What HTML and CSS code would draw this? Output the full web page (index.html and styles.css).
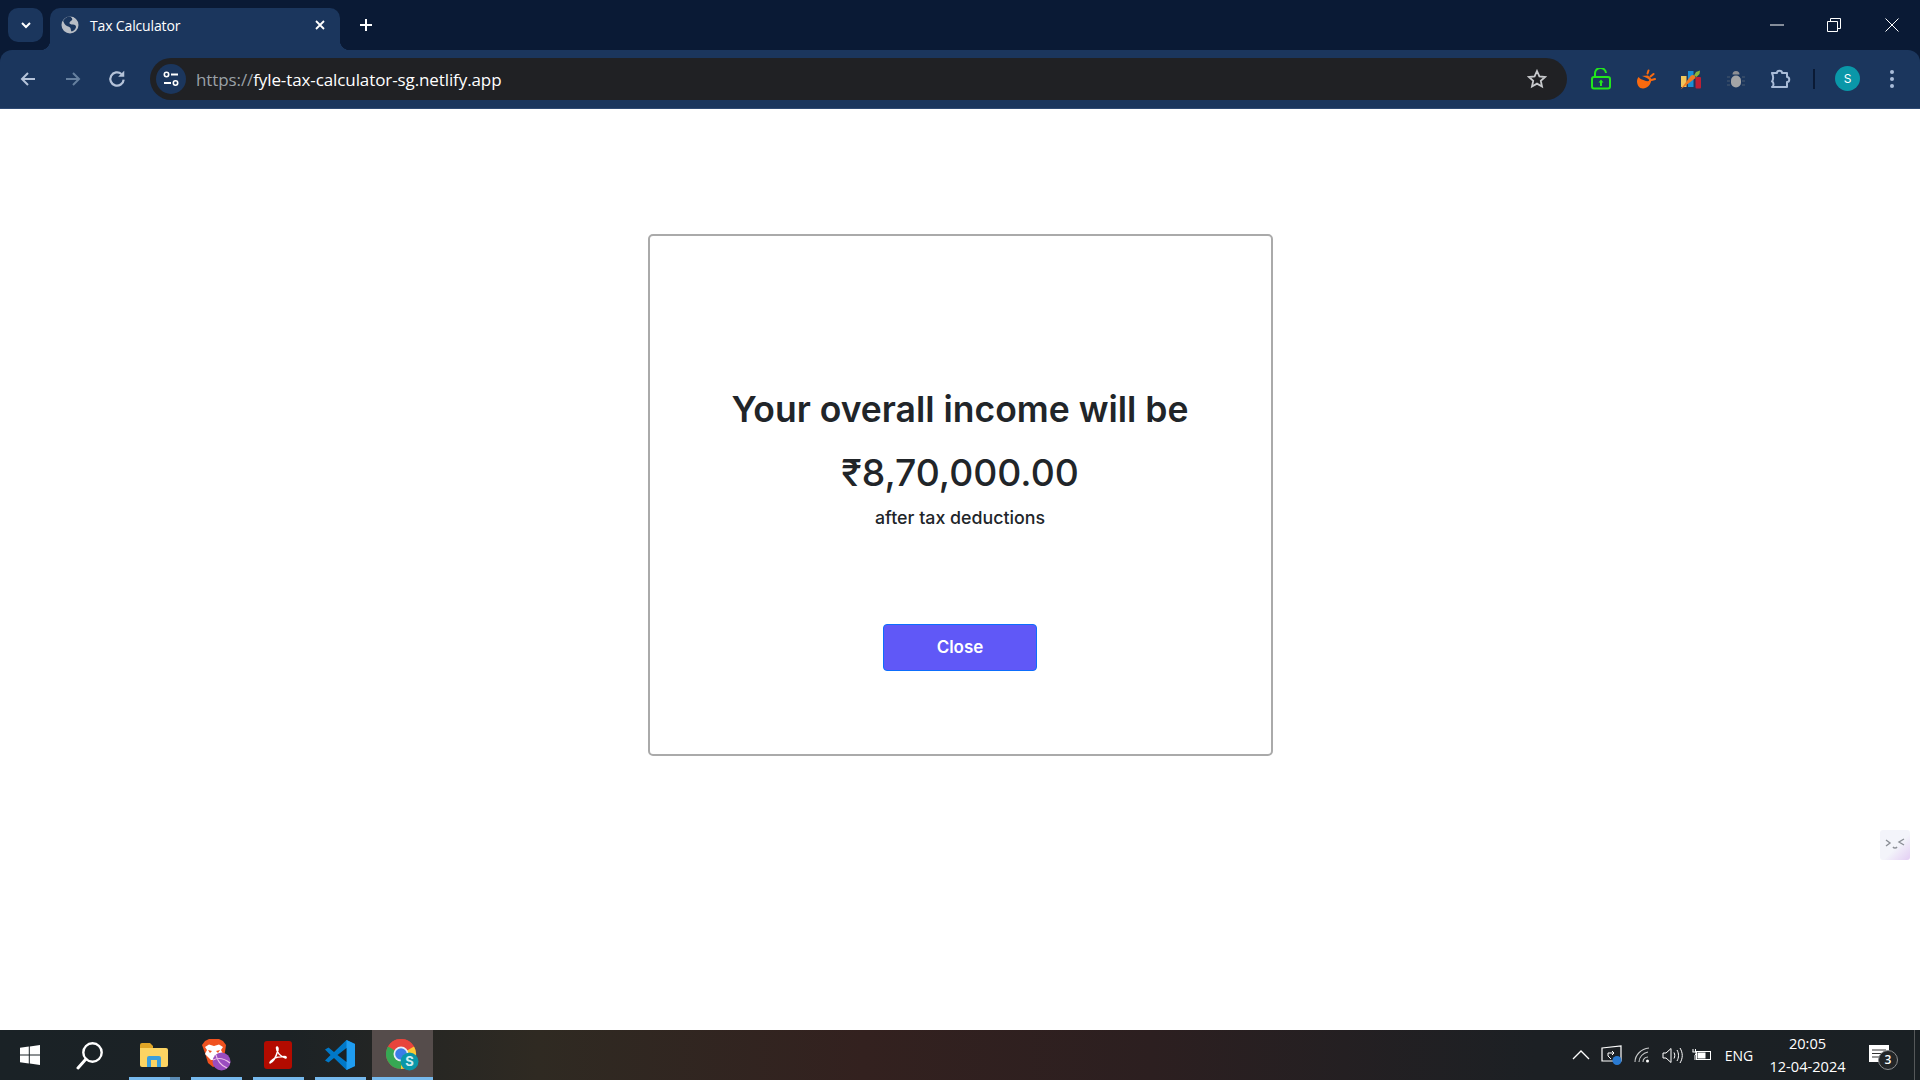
FILE: index.html
```html
<!DOCTYPE html>
<html lang="en">
<head>
<meta charset="utf-8">
<title>Tax Calculator</title>
<link rel="stylesheet" href="styles.css">
</head>
<body>
<header class="browser">
  <div class="tabstrip">
    <button class="tab-list"><svg width="14" height="14" viewBox="0 0 14 14"><path d="M3 5l4 4 4-4" fill="none" stroke="#fff" stroke-width="2"/></svg></button>
    <div class="tab">
      <svg class="favicon" width="18" height="18" viewBox="0 0 18 18"><circle cx="9" cy="9" r="8.5" fill="#b9bec6"/><path d="M9 .5c2 1 3 2 2.500 3.500-.5 1.500-2.500 1-3 2.500s1.500 2 3.500 2 3 1 3 2.500-1.500 3-3 4l-1.500.5c-1-1.500-.5-3-1.500-4S5 10 4 8.500 2.500 5.500 2 5C3.500 2.500 6 .5 9 .5z" fill="#1b365d"/><path d="M10 1c3 .5 6 3 6.500 6l-3 1c-1-1-3-.5-4-1.500S12 4 11.500 3z" fill="#b9bec6"/></svg>
      <span class="tab-title">Tax Calculator</span>
      <svg class="tab-close" width="12" height="12" viewBox="0 0 12 12"><path d="M2 2l8 8M10 2l-8 8" stroke="#fff" stroke-width="1.800"/></svg>
    </div>
    <div class="new-tab"><svg width="16" height="16" viewBox="0 0 16 16"><path d="M8 2v12M2 8h12" stroke="#fff" stroke-width="2"/></svg></div>
    <div class="spacer"></div>
    <div class="win-btn win-min"><svg width="14" height="14" viewBox="0 0 14 14"><path d="M0 7h14" stroke="#fff" stroke-width="1"/></svg></div>
    <div class="win-btn win-max"><svg width="14" height="14" viewBox="0 0 14 14"><path d="M.5 3.500h10v10H.5z M3.500 3.500V.5h10v10h-3" fill="none" stroke="#fff" stroke-width="1"/></svg></div>
    <div class="win-btn win-close"><svg width="14" height="14" viewBox="0 0 14 14"><path d="M.5.5l13 13M13.500.5l-13 13" stroke="#fff" stroke-width="1"/></svg></div>
  </div>
  <div class="toolbar">
    <div class="nav-btn"><svg width="18" height="18" viewBox="0 0 18 18"><path d="M16 9H3M9 3L3 9l6 6" fill="none" stroke="#b5c3d9" stroke-width="2"/></svg></div>
    <div class="nav-btn"><svg width="18" height="18" viewBox="0 0 18 18"><path d="M2 9h13M9 3l6 6-6 6" fill="none" stroke="#66809f" stroke-width="2"/></svg></div>
    <div class="nav-btn"><svg width="20" height="20" viewBox="0 0 18 18"><path d="M15 9.500A6 6 0 1 1 13 4.500" fill="none" stroke="#b5c3d9" stroke-width="2"/><path d="M15.500 1.500v5.500H10z" fill="#b5c3d9"/></svg></div>
    <div class="omnibox">
      <div class="site-icon"><svg width="16" height="16" viewBox="0 0 16 16"><circle cx="3.500" cy="3.500" r="2.200" fill="none" stroke="#fff" stroke-width="1.600"/><path d="M8 3.500h7M1 12h7" stroke="#fff" stroke-width="1.800"/><circle cx="12.500" cy="12" r="2.200" fill="none" stroke="#fff" stroke-width="1.600"/></svg></div>
      <div class="url"><span class="url-scheme">https://</span>fyle-tax-calculator-sg.netlify.app</div>
      <svg class="star" width="20" height="20" viewBox="0 0 20 20"><path d="M10 2l2.400 5.400 5.600.6-4.200 3.800 1.200 5.700L10 14.600l-5 2.900 1.200-5.700L2 8l5.600-.6z" fill="none" stroke="#c7c9cc" stroke-width="1.800"/></svg>
    </div>
    <div class="ext"><svg width="20" height="22" viewBox="0 0 20 22"><path d="M4 9V6a5.500 5.500 0 0 1 11-1" fill="none" stroke="#22e61c" stroke-width="2"/><rect x="1" y="9" width="18" height="11.500" rx="2" fill="none" stroke="#22e61c" stroke-width="2"/><path d="M10 11.500l2.500 3h-1.500v3.500H9v-3.500H7.500z" fill="#22e61c"/></svg></div>
    <div class="ext"><svg width="20" height="20" viewBox="0 0 20 20"><path d="M1 12c0-3 2-4.500 4-5l7-.5 3.500 3.500c-.5 6-4.500 9.500-8.500 9.500S1 16 1 12z" fill="#f96a0f"/><ellipse cx="8" cy="9.500" rx="5.500" ry="1.700" transform="rotate(22 8 9.500)" fill="#1b365d"/><path d="M11.500 4.500l1-3M14.500 7.500l3-2.500M15.500 11l3.500-1" stroke="#f96a0f" stroke-width="2" stroke-linecap="round"/></svg></div>
    <div class="ext"><svg width="22" height="22" viewBox="0 0 22 22"><path d="M1 8h5.500v11H1z" fill="#f2c65b"/><rect x="8" y="3" width="5.500" height="16" fill="#1a8fd6"/><rect x="15.500" y="9" width="5.500" height="11.500" rx="1" fill="#bd2034"/><path d="M.5 21.500L11 7.500c2-1.500 4.500 0 4.500 2.500z" fill="#f07a21"/><path d="M14 7.500l2-3.500 4-1.500-.5 3.500-3 3z" fill="#8ab53a"/></svg></div>
    <div class="ext"><svg width="20" height="22" viewBox="0 0 20 22"><path d="M6.500 6.500a3.500 3.500 0 0 1 7 0z" fill="#8d8f94"/><rect x="5" y="7.500" width="10" height="12" rx="5" fill="#a3a4a6"/><path d="M1 9h3M1 13h3M1 17h3M16 9h3M16 13h3M16 17h3" stroke="#4a5a70" stroke-width="1.200"/></svg></div>
    <div class="ext"><svg width="22" height="22" viewBox="0 0 22 22"><path d="M2 5h5c0-3 5-3 5 0h5v4c3 0 3 5 0 5v5H2c2-.5 2-5 0-5.500 1.500-2 1.500-5 0-8.500z" fill="none" stroke="#a9bcd8" stroke-width="2" stroke-linejoin="round"/></svg></div>
    <div class="tb-sep"></div>
    <div class="avatar">S</div>
    <div class="dots"><span></span><span></span><span></span></div>
  </div>
</header>

<main class="page">
  <section class="modal">
    <h2 class="modal-title">Your overall income will be</h2>
    <p class="modal-amount">₹8,70,000.00</p>
    <p class="modal-note">after tax deductions</p>
    <button class="modal-close">Close</button>
  </section>
  <aside class="float-widget">
    <svg width="20" height="12" viewBox="0 0 20 12"><path d="M1 2l4 3-4 3M19 1l-5 3 5 3" fill="none" stroke="#8b8f96" stroke-width="1.400"/><path d="M8 9c1 1.500 3 1.500 4 0" fill="none" stroke="#8b8f96" stroke-width="1.400"/></svg>
  </aside>
</main>

<footer class="taskbar">
  <div class="tb-start"><svg width="20" height="20" viewBox="0 0 20 20"><path d="M0 2.800L8.800 1.600v8H0zM9.800 1.400L20 0v9.600H9.800zM0 10.600h8.800v8L0 17.300zM9.800 10.600H20V20L9.800 18.600z" fill="#fff"/></svg></div>
  <div class="tb-search"><svg width="28" height="29" viewBox="0 0 28 29"><circle cx="16.500" cy="11.500" r="9.200" fill="none" stroke="#fff" stroke-width="2.400"/><path d="M10 18L2 27" stroke="#fff" stroke-width="3" stroke-linecap="round"/></svg></div>
  <div class="tb-apps">
    <div class="app app-split"><svg width="28" height="24" viewBox="0 0 28 24"><path d="M0 2a2 2 0 0 1 2-2h8l3 3v4H0z" fill="#e0a526"/><path d="M0 5h26a2 2 0 0 1 2 2v15a2 2 0 0 1-2 2H2a2 2 0 0 1-2-2z" fill="#fcd462"/><path d="M7 24v-9a2 2 0 0 1 2-2h10a2 2 0 0 1 2 2v9h-4v-7h-6v7z" fill="#3b9fdb"/></svg></div>
    <div class="app"><svg width="30" height="32" viewBox="0 0 30 32"><path d="M1 6l3-4 4-2h10l4 2 3 4-1 7-3 9-6 5-3 1-5-4-3-10z" fill="#f0521f"/><path d="M4 8l4-2.500 5 1.500 5-1.500 4 2.500-2 3 2 4-6 6h-6l-6-6 2-4z" fill="#fff"/><path d="M7 11l4 1-2 2zM19 11l-4 1 2 2z" fill="#f0521f"/><circle cx="20.500" cy="22.500" r="9" fill="#9a4dbf"/><path d="M12 21c6-3 12-1 17 3M15 16c1 5 5 11 11 13" fill="none" stroke="#efc4e8" stroke-width="1.200"/></svg></div>
    <div class="app"><svg width="28" height="28" viewBox="0 0 28 28"><rect width="28" height="28" rx="3" fill="#b30b00"/><path d="M6 22c3-1 6-6 8-13 .5-3-1.500-4-1.500-2 0 4 4 9 9 10 1 0 1-1.500-1-1.500-4 0-9 1-11 2.500-2 1.500-4 3.500-3.500 4z" fill="none" stroke="#fff" stroke-width="1.500"/></svg></div>
    <div class="app"><svg width="30" height="30" viewBox="0 0 30 30"><path d="M21.500 0L30 4v22l-8.500 4L9 18l-5.500 4.500L0 20.500 5.500 15 0 9.500 3.500 7.500 9 12z" fill="#0078c8"/><path d="M21.500 0L30 4v22l-8.500 4z" fill="#1f9cf0"/><path d="M21.500 8v14L12.500 15z" fill="#1a2125"/></svg></div>
    <div class="app app-active"><svg width="33" height="32" viewBox="0 0 33 32"><circle cx="15" cy="15" r="15" fill="#e8453c"/><path d="M15 15L2 7.500A15 15 0 0 0 15 30z" fill="#36a853"/><path d="M15 15v15A15 15 0 0 0 28 7.500z" fill="#fcc934"/><path d="M2 7.500A15 15 0 0 1 28 7.500H15z" fill="#e8453c"/><circle cx="15" cy="15" r="7.500" fill="#e9eef6"/><circle cx="15" cy="15" r="5.800" fill="#3b7de8"/><circle cx="23.500" cy="22.500" r="9" fill="#0a97a8"/><text x="23.500" y="27" class="badge-s">S</text></svg></div>
  </div>
  <div class="spacer"></div>
  <div class="tray">
    <svg class="tray-caret" width="18" height="10" viewBox="0 0 18 10"><path d="M1 9l8-8 8 8" fill="none" stroke="#fff" stroke-width="1.300"/></svg>
    <svg class="tray-sec" width="22" height="20" viewBox="0 0 22 20"><path d="M1 3l19-2v15H1z" fill="none" stroke="#fff" stroke-width="1.200"/><path d="M7 11V8h6M11 6l2 2-2 2M7 11l3 3" fill="none" stroke="#fff"/><circle cx="16" cy="15.500" r="4.500" fill="#2a7ad1"/></svg>
    <svg class="tray-wifi" width="16" height="16" viewBox="0 0 16 16"><path d="M1 15C1 8 7 2 15 1M5 15c0-5 4-9 9-10M9 15c0-3 2-5 5-5" fill="none" stroke="#c9cbcc" stroke-width="1.100"/><circle cx="13.500" cy="14" r="1.500" fill="#fff"/></svg>
    <svg class="tray-vol" width="21" height="17" viewBox="0 0 21 17"><path d="M1 6h3l5-4.500v14L4 11H1z" fill="none" stroke="#fff"/><path d="M12 5.500c1 2 1 4 0 6M15 3c2 3.500 2 7.500 0 11M18 1c3 5 3 10 0 15" fill="none" stroke="#fff"/></svg>
    <svg class="tray-bat" width="20" height="12" viewBox="0 0 20 12"><rect x="4.500" y="2.500" width="14" height="8" fill="none" stroke="#fff"/><rect x="5.500" y="3.500" width="8" height="6" fill="#fff"/><path d="M1 0v3M3.500 0v3M.5 3h3.500v2l-1 1v5" fill="none" stroke="#fff"/></svg>
    <span class="tray-lang">ENG</span>
    <div class="clock"><span>20:05</span><span>12-04-2024</span></div>
    <div class="notif">
      <svg width="20" height="17" viewBox="0 0 20 17"><path d="M0 0h20v17H0z" fill="#fff"/><path d="M3 5h14M3 8.500h14M3 12h9" stroke="#333" stroke-width="1"/></svg>
      <span class="notif-count">3</span>
    </div>
    <div class="show-desktop"></div>
  </div>
</footer>
</body>
</html>
```

FILE: styles.css
```css
* { box-sizing: border-box; }
html, body { margin: 0; padding: 0; height: 100%; overflow: hidden; }
body {
  display: flex;
  flex-direction: column;
  width: 1920px;
  height: 1080px;
  background: #fff;
  font-family: Inter, "Liberation Sans", sans-serif;
  color: #212529;
}
svg { display: block; flex: none; }

.browser { background: #0a1a35; flex: none; }
.tabstrip {
  height: 50px;
  display: flex;
  align-items: flex-start;
  padding-left: 8px;
}
.tab-list {
  width: 35px;
  height: 34px;
  margin-top: 8px;
  border: 0;
  padding: 0;
  border-radius: 10px;
  background: #1b365d;
  display: flex;
  align-items: center;
  justify-content: center;
}
.tab {
  position: relative;
  margin-left: 7px;
  margin-top: 8px;
  width: 290px;
  height: 42px;
  background: #1b365d;
  border-radius: 10px 10px 0 0;
  display: flex;
  align-items: center;
  padding: 0 14px 8px 11px;
}
.tab::before, .tab::after {
  content: "";
  position: absolute;
  bottom: 0;
  width: 10px;
  height: 10px;
}
.tab::before { left: -10px; background: radial-gradient(circle at 0 0, transparent 10px, #1b365d 10.5px); }
.tab::after { right: -10px; background: radial-gradient(circle at 100% 0, transparent 10px, #1b365d 10.5px); }
.tab-title {
  margin-left: 11px;
  flex: 1;
  font-family: "Open Sans", sans-serif;
  font-size: 14px;
  color: #fff;
  letter-spacing: -0.15px;
}
.new-tab {
  width: 30px;
  height: 30px;
  margin: 10px 0 0 11px;
  display: flex;
  align-items: center;
  justify-content: center;
}
.spacer { flex: 1; }
.win-btn {
  height: 50px;
  display: flex;
  align-items: center;
  justify-content: center;
}
.win-min { width: 56px; }
.win-max { width: 58px; }
.win-close { width: 57px; }

.toolbar {
  height: 59px;
  background: #1b365d;
  border-top-left-radius: 12px;
  border-top-right-radius: 12px;
  border-bottom: 1px solid #2f4a73;
  display: flex;
  align-items: center;
  padding: 0 18px 1px 6px;
}
.nav-btn {
  width: 44.500px;
  display: flex;
  justify-content: center;
}
.omnibox {
  flex: 1;
  height: 42px;
  margin-left: 10.500px;
  border-radius: 21px;
  background: #202124;
  display: flex;
  align-items: center;
  padding: 0 20px 0 6px;
}
.site-icon {
  width: 30px;
  height: 30px;
  border-radius: 50%;
  background: #1b365d;
  display: flex;
  align-items: center;
  justify-content: center;
}
.url {
  flex: 1;
  margin-left: 10px;
  padding-top: 1px;
  font-family: "Open Sans", sans-serif;
  font-size: 17px;
  letter-spacing: -0.1px;
  color: #fff;
}
.url-scheme { color: #9aa0a6; }
.ext {
  width: 45px;
  display: flex;
  justify-content: center;
}
.omnibox + .ext { margin-left: 11px; }
.tb-sep {
  width: 2px;
  height: 20px;
  margin-left: 10px;
  background: #0a1a35;
}
.avatar {
  width: 25px;
  height: 25px;
  margin-left: 20px;
  border-radius: 50%;
  background: #0a97a8;
  color: #fff;
  font-size: 12px;
  display: flex;
  align-items: center;
  justify-content: center;
}
.dots {
  width: 20px;
  margin-left: 22px;
  display: flex;
  flex-direction: column;
  align-items: center;
  gap: 3px;
}
.dots span {
  width: 4px;
  height: 4px;
  border-radius: 50%;
  background: #a9bcd8;
}

.page {
  flex: 1;
  position: relative;
  display: flex;
  justify-content: center;
  align-items: flex-start;
  background: #fff;
}
.modal {
  width: 625px;
  height: 522px;
  margin-top: 125px;
  border: 2px solid #aaa;
  border-radius: 5px;
  display: flex;
  flex-direction: column;
  align-items: center;
  padding-top: 146.500px;
}
.modal-title {
  margin: 0;
  font-size: 35.500px;
  line-height: 54px;
  font-weight: 600;
}
.modal-amount {
  margin: 9.500px 0 0;
  font-size: 37.300px;
  line-height: 54px;
  font-weight: 500;
}
.modal-note {
  margin: 3.800px 0 0;
  font-size: 17.800px;
  line-height: 27px;
  font-weight: 500;
}
.modal-close {
  margin-top: 93.200px;
  width: 154px;
  height: 47px;
  border: 1px solid #0d6efd;
  border-radius: 4px;
  background: #6058f7;
  color: #fff;
  font: 600 17px Inter, sans-serif;
}
.float-widget {
  position: absolute;
  right: 10px;
  top: 721px;
  width: 30px;
  height: 30px;
  border-radius: 3px;
  background: linear-gradient(135deg, #f3f4fa 55%, #e3cdf3 100%);
  display: flex;
  align-items: flex-start;
  justify-content: center;
  padding-top: 8px;
}

.taskbar {
  flex: none;
  height: 50px;
  display: flex;
  align-items: center;
  color: #fff;
  background: linear-gradient(90deg, #1a2226 0%, #1c2225 15%, #2f2a22 28%, #33211f 45%, #2c1f20 60%, #1c2024 80%, #1a2024 100%);
}
.tb-start {
  width: 60px;
  display: flex;
  justify-content: center;
}
.tb-search {
  width: 60px;
  display: flex;
  justify-content: center;
}
.tb-apps {
  margin-left: 9px;
  display: flex;
  gap: 11px;
  height: 100%;
}
.app {
  width: 51px;
  height: 100%;
  display: flex;
  align-items: center;
  justify-content: center;
  border-bottom: 3px solid #76b9ed;
  padding: 2px 1px 0 0;
}
.app-split { border-image: linear-gradient(90deg, #76b9ed 40px, #5b8bb3 40px) 1; }
.app-active {
  width: 61px;
  margin-left: -5px;
  background: #554c4b;
}
.badge-s {
  font: 700 13px Inter, sans-serif;
  fill: #cfeef2;
  text-anchor: middle;
}
.tray {
  display: flex;
  align-items: center;
  height: 100%;
}
.tray-caret { margin-right: 11px; }
.tray-sec { margin-right: 11px; }
.tray-wifi { margin-right: 12px; }
.tray-vol { margin-right: 9px; }
.tray-bat { margin-right: 9px; }
.tray-lang {
  font-family: "Open Sans", sans-serif;
  font-size: 14px;
  width: 36px;
  text-align: center;
}
.clock {
  margin-left: 7.500px;
  width: 86px;
  display: flex;
  flex-direction: column;
  align-items: center;
  gap: 4px;
  font-family: "Open Sans", sans-serif;
  font-size: 14.600px;
  line-height: 19px;
}
.notif {
  position: relative;
  margin-left: 18.500px;
  width: 20px;
  height: 17px;
  margin-top: -4px;
}
.notif-count {
  position: absolute;
  left: 9px;
  top: 5px;
  width: 20px;
  height: 20px;
  border-radius: 50%;
  border: 1px solid #8a8c8e;
  background: #232628;
  font: 600 12px "Open Sans", sans-serif;
  display: flex;
  align-items: center;
  justify-content: center;
}
.show-desktop {
  width: 1px;
  height: 100%;
  margin-left: 25px;
  margin-right: 5px;
  background: #55585a;
}
```
